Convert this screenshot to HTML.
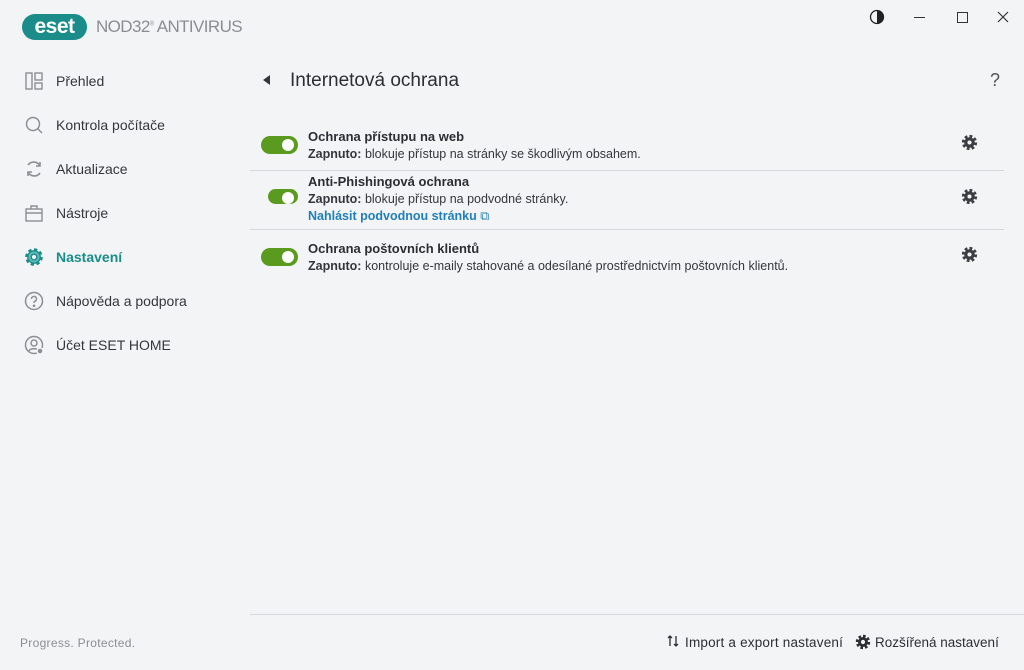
<!DOCTYPE html>
<html><head><meta charset="utf-8"><style>
*{margin:0;padding:0;box-sizing:border-box}
body{width:1024px;height:670px;background:#f3f4f6;font-family:"Liberation Sans",sans-serif;color:#2b2f33;position:relative;overflow:hidden}
.a{position:absolute}
.nav{position:absolute;left:24px;display:flex;align-items:center;font-size:14px;color:#33373b}
.nav svg{width:20px;height:20px;margin-right:12px}
.row .t{font-size:13px;font-weight:bold;color:#2b2f33}
.row .d{font-size:12.5px;color:#33373b;margin-top:3px}
.tg{position:absolute;width:37px;height:18px;border-radius:9px;background:#5a9a1e}
.tg:after{content:"";position:absolute;right:4px;top:3px;width:12px;height:12px;border-radius:50%;background:#fff}
.hr{position:absolute;left:250px;right:20px;height:1px;background:#d6d8db}
</style></head><body>
<div class="a" style="left:22px;top:14px;width:65px;height:26px;border-radius:13px;background:#1a8d8a;color:#fff;font-weight:bold;font-size:21px;line-height:25px;text-align:center;letter-spacing:-0.5px">eset</div>
<div class="a" style="left:96px;top:17px;font-size:17px;color:#8a8e92;letter-spacing:-0.6px">NOD32<sup style="font-size:6px">&#174;</sup> ANTIVIRUS</div>

<svg class="a" style="left:869px;top:9px" width="16" height="16" viewBox="0 0 16 16"><circle cx="8" cy="8" r="6.5" fill="none" stroke="#222" stroke-width="1.3"/><path d="M8 1.5a6.5 6.5 0 0 1 0 13z" fill="#222"/></svg>
<div class="a" style="left:914px;top:17px;width:11px;height:1px;background:#333"></div>
<div class="a" style="left:957px;top:12px;width:11px;height:11px;border:1px solid #333"></div>
<svg class="a" style="left:997px;top:11px" width="12" height="12"><path d="M1 1L11 11M11 1L1 11" stroke="#333" stroke-width="1.2"/></svg>

<div class="nav" style="top:71px"><svg viewBox="0 0 20 20" fill="none" stroke="#8b8f93" stroke-width="1.4"><rect x="2" y="2" width="6" height="16"/><rect x="11" y="2" width="7" height="7"/><rect x="11" y="12" width="7" height="6"/></svg>Přehled</div>
<div class="nav" style="top:115px"><svg viewBox="0 0 20 20" fill="none" stroke="#8b8f93" stroke-width="1.5"><circle cx="9" cy="9" r="6.5"/><path d="M14 14l4 4"/></svg>Kontrola počítače</div>
<div class="nav" style="top:159px"><svg viewBox="0 0 20 20" fill="none" stroke="#8b8f93" stroke-width="1.6"><path d="M16 7A7 7 0 0 0 4 6M4 13a7 7 0 0 0 12 1"/><path d="M16 3v4h-4M4 17v-4h4"/></svg>Aktualizace</div>
<div class="nav" style="top:203px"><svg viewBox="0 0 20 20" fill="none" stroke="#8b8f93" stroke-width="1.4"><rect x="2" y="6" width="16" height="12"/><path d="M7 6V3h6v3M2 10h16"/></svg>Nástroje</div>
<div class="nav" style="top:247px;color:#1a8d8a;font-weight:bold"><svg viewBox="0 0 20 20"><circle cx="10" cy="10" r="7.3" fill="none" stroke="#1a8d8a" stroke-width="3" stroke-dasharray="3.2 2.5"/><circle cx="10" cy="10" r="6.2" fill="#5fb8b5" stroke="#1a8d8a" stroke-width="1.4"/><circle cx="10" cy="10" r="2.8" fill="#f3f4f6" stroke="#1a8d8a" stroke-width="1.4"/></svg>Nastavení</div>
<div class="nav" style="top:291px"><svg viewBox="0 0 20 20" fill="none" stroke="#8b8f93" stroke-width="1.5"><circle cx="10" cy="10" r="8.5"/><path d="M7.5 8a2.5 2.5 0 1 1 3.5 2.2c-.8.4-1 .9-1 1.8"/><circle cx="10" cy="14.8" r=".6" fill="#8b8f93"/></svg>Nápověda a podpora</div>
<div class="nav" style="top:335px"><svg viewBox="0 0 20 20" fill="none" stroke="#8b8f93" stroke-width="1.5"><circle cx="10" cy="10" r="8.5"/><circle cx="10" cy="8" r="3"/><path d="M5 16c1-3 9-3 10 0"/><circle cx="16" cy="16" r="3" fill="#8b8f93" stroke="#f3f4f6"/></svg>Účet ESET HOME</div>

<div class="a" style="left:20px;top:636px;font-size:12px;color:#8a8e92;letter-spacing:.3px">Progress. Protected.</div>

<svg class="a" style="left:263px;top:75px" width="8" height="10"><path d="M7 0v10L0 5z" fill="#33373b"/></svg>
<div class="a" style="left:290px;top:70px;font-size:19px;color:#2b2f33">Internetová ochrana</div>
<div class="a" style="left:990px;top:70px;font-size:18px;color:#555">?</div>

<div class="tg" style="left:261px;top:136px"></div>
<div class="a row" style="left:308px;top:129px"><div class="t">Ochrana přístupu na web</div><div class="d"><b>Zapnuto:</b> blokuje přístup na stránky se škodlivým obsahem.</div></div>
<div class="hr" style="top:170px"></div>
<div class="tg" style="left:268px;top:189px;width:30px;height:15px"></div>
<div class="a row" style="left:308px;top:174px"><div class="t">Anti-Phishingová ochrana</div><div class="d"><b>Zapnuto:</b> blokuje přístup na podvodné stránky.</div><div style="font-size:12.5px;color:#1f7fb8;font-weight:bold;margin-top:3px">Nahlásit podvodnou stránku <span style="font-weight:normal">&#10697;</span></div></div>
<div class="hr" style="top:229px"></div>
<div class="tg" style="left:261px;top:248px"></div>
<div class="a row" style="left:308px;top:241px"><div class="t">Ochrana poštovních klientů</div><div class="d"><b>Zapnuto:</b> kontroluje e-maily stahované a odesílané prostřednictvím poštovních klientů.</div></div>

<svg class="a" style="left:961px;top:134px" width="17" height="17" viewBox="0 0 20 20"><circle cx="10" cy="10" r="7.3" fill="none" stroke="#3a3e42" stroke-width="3.4" stroke-dasharray="3.2 2.5"/><circle cx="10" cy="10" r="6.2" fill="#3a3e42"/><circle cx="10" cy="10" r="2.4" fill="#f3f4f6"/></svg>
<svg class="a" style="left:961px;top:188px" width="17" height="17" viewBox="0 0 20 20"><circle cx="10" cy="10" r="7.3" fill="none" stroke="#3a3e42" stroke-width="3.4" stroke-dasharray="3.2 2.5"/><circle cx="10" cy="10" r="6.2" fill="#3a3e42"/><circle cx="10" cy="10" r="2.4" fill="#f3f4f6"/></svg>
<svg class="a" style="left:961px;top:246px" width="17" height="17" viewBox="0 0 20 20"><circle cx="10" cy="10" r="7.3" fill="none" stroke="#3a3e42" stroke-width="3.4" stroke-dasharray="3.2 2.5"/><circle cx="10" cy="10" r="6.2" fill="#3a3e42"/><circle cx="10" cy="10" r="2.4" fill="#f3f4f6"/></svg>

<div class="hr" style="top:614px;right:0"></div>
<svg class="a" style="left:666px;top:634px" width="14" height="14"><path d="M4 12V2M2 4l2-2 2 2M10 2v10M8 10l2 2 2-2" stroke="#2b2f33" stroke-width="1.3" fill="none"/></svg>
<div class="a" style="left:685px;top:635px;font-size:13.5px;color:#2b2f33;letter-spacing:.2px">Import a export nastavení</div>
<svg class="a" style="left:855px;top:634px" width="16" height="16" viewBox="0 0 20 20"><circle cx="10" cy="10" r="7.3" fill="none" stroke="#2b2f33" stroke-width="3.4" stroke-dasharray="3.2 2.5"/><circle cx="10" cy="10" r="6.2" fill="#2b2f33"/><circle cx="10" cy="10" r="2.6" fill="#f3f4f6"/></svg>
<div class="a" style="left:875px;top:635px;font-size:13.5px;color:#2b2f33">Rozšířená nastavení</div>
</body></html>
